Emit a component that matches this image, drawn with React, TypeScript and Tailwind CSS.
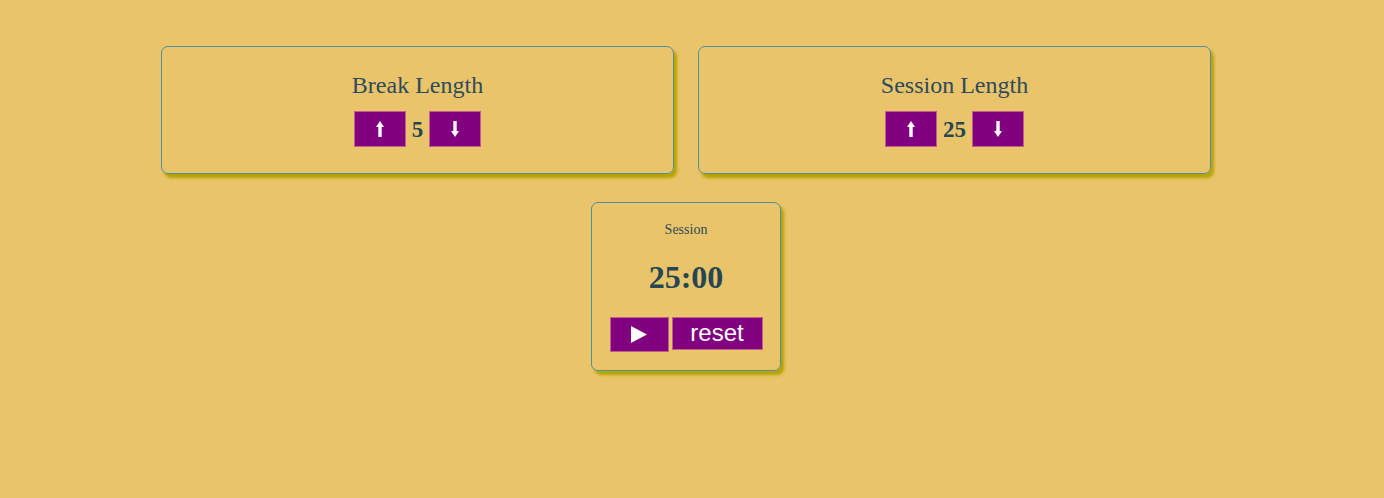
import React from "react";

const serif = { fontFamily: '"Liberation Serif", "Times New Roman", serif' };

function ArrowUp() {
  return (
    <svg width="10" height="18" viewBox="0 0 10 18">
      <path d="M5 1 L9 7 L6.7 7 L6.7 17 L3.3 17 L3.3 7 L1 7 Z" fill="white" />
    </svg>
  );
}

function ArrowDown() {
  return (
    <svg width="10" height="18" viewBox="0 0 10 18">
      <path d="M5 17 L9 11 L6.7 11 L6.7 1 L3.3 1 L3.3 11 L1 11 Z" fill="white" />
    </svg>
  );
}

function LengthCard({ title, value }: { title: string; value: number }) {
  return (
    <div className="w-[513px] h-[128px] rounded-[7px] border border-[#4f8fa0] shadow-[3px_4px_3px_#b5a300] flex flex-col items-center pt-[25px]">
      <div className="text-[24px] leading-[27px] text-[#2f4a5a]" style={serif}>
        {title}
      </div>
      <div className="flex items-center gap-[6px] mt-[12px]">
        <button className="w-[52px] h-[36px] bg-[#800080] border border-[#c0608a] flex items-center justify-center">
          <ArrowUp />
        </button>
        <span className="text-[23px] font-bold text-[#264653] leading-none" style={serif}>
          {value}
        </span>
        <button className="w-[52px] h-[36px] bg-[#800080] border border-[#c0608a] flex items-center justify-center">
          <ArrowDown />
        </button>
      </div>
    </div>
  );
}

export default function App() {
  return (
    <div className="w-[1384px] h-[498px] bg-[#e9c46a] flex flex-col items-center pt-[46px] pr-[12px]">
      <div className="flex gap-[24px]">
        <LengthCard title="Break Length" value={5} />
        <LengthCard title="Session Length" value={25} />
      </div>
      <div className="mt-[28px] w-[190px] h-[169px] rounded-[7px] border border-[#4f8fa0] shadow-[3px_4px_3px_#b5a300] flex flex-col items-center pt-[18px]">
        <div className="text-[14px] leading-[18px] text-[#2f4a5a]" style={serif}>
          Session
        </div>
        <div className="mt-[20px] text-[32px] leading-[36px] font-bold text-[#264653]" style={serif}>
          25:00
        </div>
        <div className="mt-[22px] flex items-start gap-[3px]">
          <button className="w-[59px] h-[35px] bg-[#800080] border border-[#c0608a] flex items-center justify-center">
            <svg width="18" height="19" viewBox="0 0 18 19">
              <path d="M1 1 L17 9.5 L1 18 Z" fill="white" />
            </svg>
          </button>
          <button
            className="w-[91px] h-[33px] bg-[#800080] border border-[#c0608a] text-white text-[24px] leading-none flex items-center justify-center pb-[1px]"
            style={{ fontFamily: '"Liberation Sans", Arial, sans-serif' }}
          >
            reset
          </button>
        </div>
      </div>
    </div>
  );
}
